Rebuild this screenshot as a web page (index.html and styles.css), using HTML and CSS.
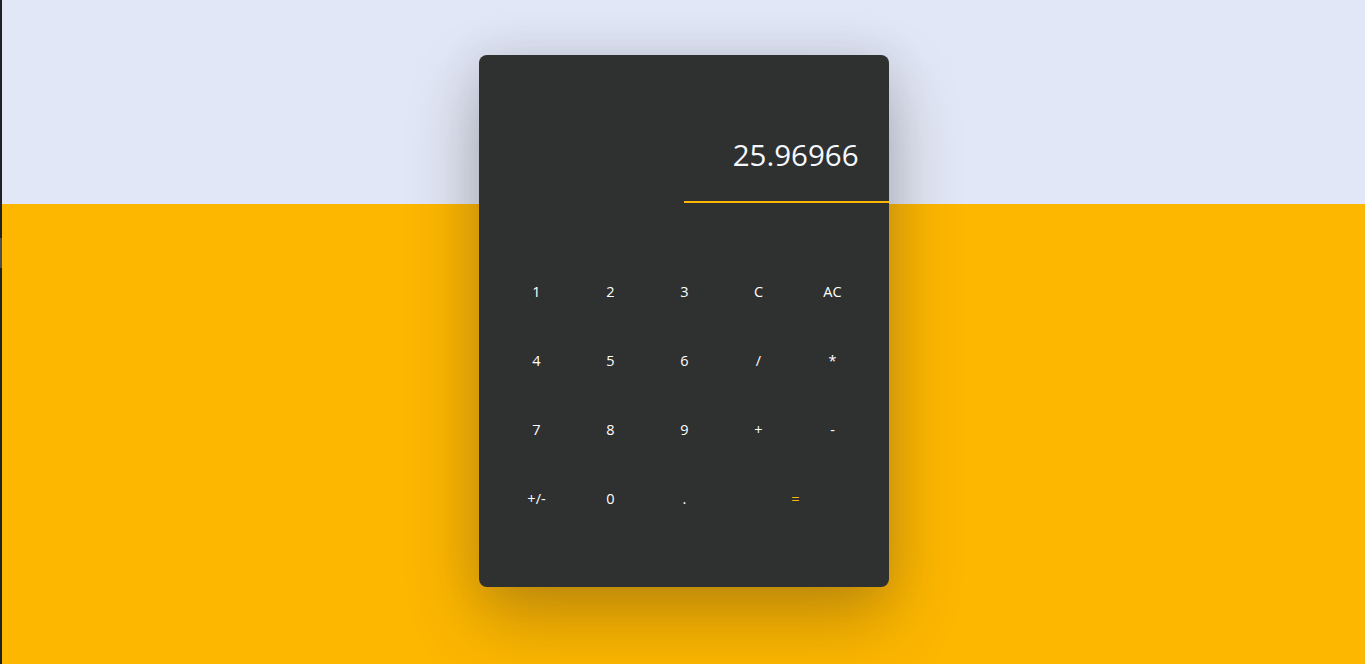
FILE: index.html
```html
<!DOCTYPE html>
<html lang="en">
<head>
<meta charset="utf-8">
<title>Calculator</title>
<link rel="stylesheet" href="styles.css">
</head>
<body>
<div class="edge"><span class="edge-mark"></span></div>
<main class="stage">
  <section class="calc">
    <div class="display">
      <div class="value">25.96966</div>
      <div class="underline"></div>
    </div>
    <div class="keys">
      <button class="key">1</button>
      <button class="key">2</button>
      <button class="key">3</button>
      <button class="key">C</button>
      <button class="key">AC</button>
      <button class="key">4</button>
      <button class="key">5</button>
      <button class="key">6</button>
      <button class="key">/</button>
      <button class="key">*</button>
      <button class="key">7</button>
      <button class="key">8</button>
      <button class="key">9</button>
      <button class="key">+</button>
      <button class="key">-</button>
      <button class="key">+/-</button>
      <button class="key">0</button>
      <button class="key">.</button>
      <button class="key equals">=</button>
    </div>
  </section>
</main>
</body>
</html>
```
FILE: styles.css
```css
* { box-sizing: border-box; }
html, body { margin: 0; padding: 0; height: 100%; }
body {
  display: flex;
  height: 664px;
  overflow: hidden;
  font-family: "Open Sans", "Noto Sans", sans-serif;
  background: linear-gradient(to bottom, #e1e7f6 0, #e1e7f6 204px, #fdb700 204px, #fdb700 100%);
}
.edge {
  width: 2px;
  flex: 0 0 2px;
  background: #202124;
  display: flex;
  flex-direction: column;
  padding-top: 238px;
}
.edge-mark {
  display: block;
  height: 30px;
  background: #4a4d52;
}
.stage {
  flex: 1;
  display: flex;
  justify-content: center;
  align-items: flex-start;
  padding-top: 55px;
}
.calc {
  width: 410px;
  height: 532px;
  background: #2f3030;
  border-radius: 8px;
  box-shadow: 0 30px 70px rgba(60, 45, 20, 0.32), 0 0 40px rgba(80, 90, 140, 0.12);
  display: flex;
  flex-direction: column;
}
.display {
  height: 148px;
  display: flex;
  flex-direction: column;
  align-items: flex-end;
  justify-content: flex-end;
}
.value {
  color: #f4f8ff;
  font-size: 29.5px;
  line-height: 40px;
  padding-right: 30px;
  margin-bottom: 26px;
}
.underline {
  width: 205px;
  height: 2px;
  background: #fdb700;
}
.keys {
  margin-top: 54px;
  padding: 0 19px 0 21px;
  display: grid;
  grid-template-columns: repeat(5, 74px);
  grid-auto-rows: 69px;
}
.key {
  background: none;
  border: 0;
  padding: 0;
  color: #ffffff;
  font-family: "Open Sans", "Noto Sans", sans-serif;
  font-size: 14.5px;
  display: flex;
  align-items: center;
  justify-content: center;
}
.equals {
  grid-column: span 2;
  color: #fdb700;
}
```
